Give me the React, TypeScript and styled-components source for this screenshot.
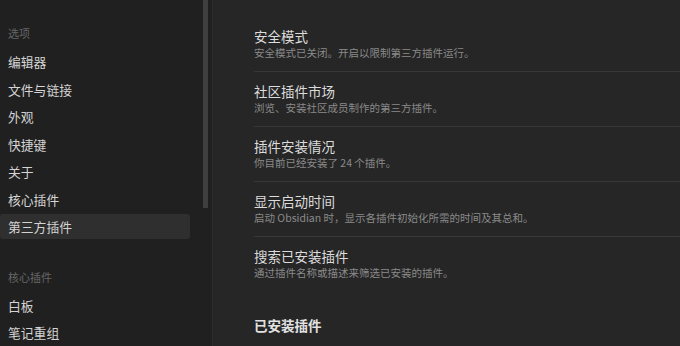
import React from "react";
import styled, { createGlobalStyle } from "styled-components";

const Global = createGlobalStyle`
  html, body { margin: 0; padding: 0; background: #262626; }
  body { font-family: "Noto Sans CJK SC", "Noto Sans", sans-serif; }
  * { box-sizing: border-box; }
`;

const Frame = styled.div`
  display: flex;
  width: 680px;
  height: 346px;
  overflow: hidden;
  background: #262626;
`;

const Sidebar = styled.aside`
  display: flex;
  width: 213px;
  flex-shrink: 0;
  background: #202020;
  border-right: 1px solid #2c2c2c;
`;

const Nav = styled.nav`
  width: 204px;
  padding-top: 21px;
`;

const Group = styled.div<{ $first?: boolean }>`
  display: flex;
  flex-direction: column;
  margin-top: ${(p) => (p.$first ? "0" : "23px")};
`;

const GroupTitle = styled.div`
  height: 25px;
  line-height: 25px;
  margin-bottom: 3px;
  padding-left: 8px;
  font-size: 11px;
  color: #666666;
`;

const NavItem = styled.div<{ $active?: boolean }>`
  width: 190px;
  height: 25px;
  line-height: 25px;
  margin-bottom: 2.5px;
  padding-left: 8px;
  font-size: 12.8px;
  color: #d4d4d4;
  border-radius: 3px;
  background: ${(p) => (p.$active ? "#2f2f2f" : "transparent")};
`;

const ScrollTrack = styled.div`
  width: 9px;
  display: flex;
  flex-direction: column;
`;

const ScrollThumb = styled.div`
  width: 5px;
  height: 208px;
  background: #3f3f3f;
`;

const Main = styled.main`
  flex: 1;
  padding: 16px 0 0 41px;
  display: flex;
  flex-direction: column;
`;

const Row = styled.div<{ $first?: boolean }>`
  border-top: 1px solid ${(p) => (p.$first ? "transparent" : "#383838")};
  padding: 10px 0;
  display: flex;
  flex-direction: column;
`;

const Title = styled.div`
  height: 18px;
  line-height: 18px;
  font-size: 13.5px;
  color: #dcdcdc;
`;

const Desc = styled.div`
  height: 16px;
  line-height: 16px;
  font-size: 10.5px;
  color: #8a8a8a;
`;

const Heading = styled.div`
  margin-top: 24px;
  height: 20px;
  line-height: 20px;
  font-size: 13.5px;
  font-weight: 700;
  color: #e2e2e2;
`;

const groups = [
  {
    title: "选项",
    items: ["编辑器", "文件与链接", "外观", "快捷键", "关于", "核心插件", "第三方插件"],
  },
  { title: "核心插件", items: ["白板", "笔记重组"] },
];

const rows = [
  ["安全模式", "安全模式已关闭。开启以限制第三方插件运行。"],
  ["社区插件市场", "浏览、安装社区成员制作的第三方插件。"],
  ["插件安装情况", "你目前已经安装了 24 个插件。"],
  ["显示启动时间", "启动 Obsidian 时，显示各插件初始化所需的时间及其总和。"],
  ["搜索已安装插件", "通过插件名称或描述来筛选已安装的插件。"],
];

export default function App() {
  return (
    <>
      <Global />
      <Frame>
        <Sidebar>
          <Nav>
            {groups.map((g, gi) => (
              <Group key={g.title + gi} $first={gi === 0}>
                <GroupTitle>{g.title}</GroupTitle>
                {g.items.map((it) => (
                  <NavItem key={it} $active={it === "第三方插件"}>
                    {it}
                  </NavItem>
                ))}
              </Group>
            ))}
          </Nav>
          <ScrollTrack>
            <ScrollThumb />
          </ScrollTrack>
        </Sidebar>
        <Main>
          {rows.map(([t, d], i) => (
            <Row key={t} $first={i === 0}>
              <Title>{t}</Title>
              <Desc>{d}</Desc>
            </Row>
          ))}
          <Heading>已安装插件</Heading>
        </Main>
      </Frame>
    </>
  );
}
